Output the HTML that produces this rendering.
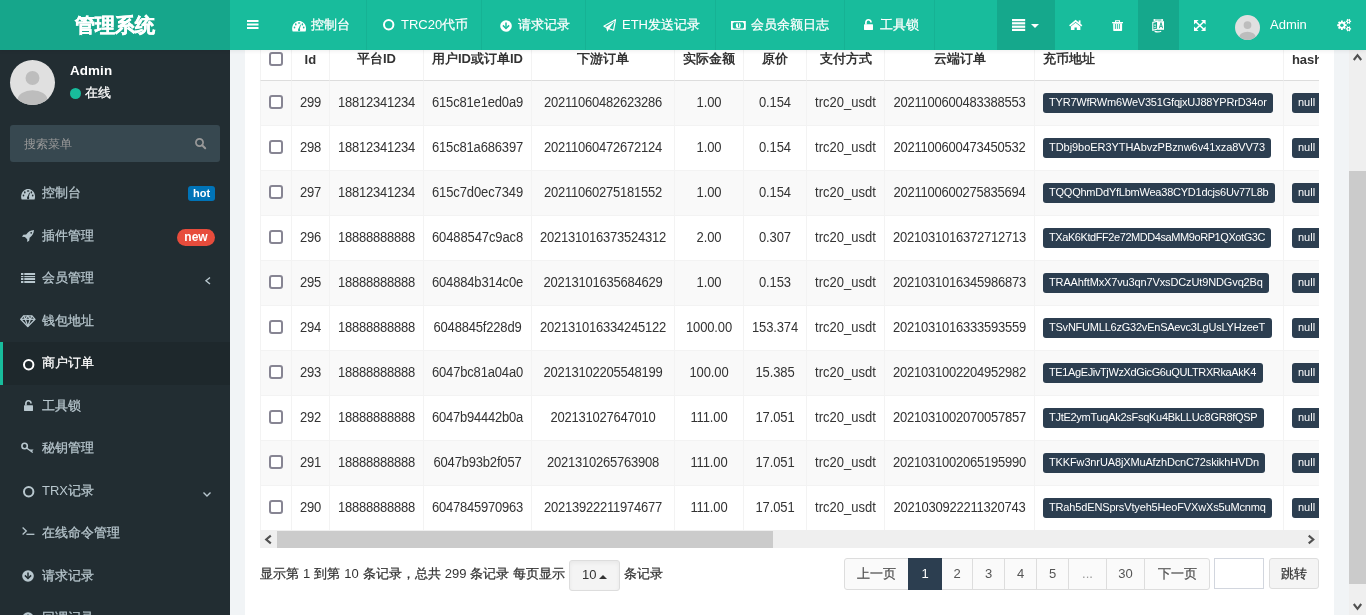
<!DOCTYPE html><html><head><meta charset="utf-8"><style>
*{box-sizing:border-box;margin:0;padding:0}
html,body{width:1366px;height:615px;overflow:hidden}
body{position:relative;font-family:"Liberation Sans",sans-serif;font-size:13px;color:#333;background:#f1f4f6}
svg.ic{position:absolute;overflow:visible;display:block}
#hdr{position:absolute;left:0;top:0;width:1366px;height:50px;background:#18bc9c;z-index:10;box-shadow:0 1px 4px rgba(0,0,0,.07)}
#logo{position:absolute;left:0;top:0;width:230px;height:50px;background:#16a68b;color:#fff;font-size:20px;font-weight:bold;text-align:center;line-height:50px;-webkit-text-stroke:0.5px #fff}
.sep{position:absolute;top:0;width:1px;height:50px;background:rgba(0,0,0,.05)}
.dark{position:absolute;top:0;height:50px;background:rgba(0,0,0,.1)}
.nt{position:absolute;top:0;height:50px;line-height:50px;color:#fff;font-size:13px;white-space:nowrap}
#side{position:absolute;left:0;top:50px;width:230px;height:565px;background:#222d32;z-index:5}
.mi{position:absolute;left:0;width:230px;height:43px;color:#b8c7ce}
.mi .t{position:absolute;left:42px;top:0;line-height:41px;font-size:13px;white-space:nowrap}
.mi.act{background:#1e282c;color:#fff}
.mi.act:before{content:"";position:absolute;left:0;top:0;width:3px;height:43px;background:#18bc9c}
.badge{position:absolute;color:#fff;font-weight:bold;font-size:11px;text-align:center}
#content{position:absolute;left:245px;top:0;width:1089px;height:615px;background:#fff}
#tbl{position:absolute;left:260px;top:0;width:1059px;height:530px;overflow:hidden}
.row{position:absolute;left:0;width:1300px;height:45px}
.row:before{content:"";position:absolute;left:0;top:0;width:100%;height:1px;background:#f3f3f3}
.row.s{background:#f9f9f9}
.c{position:absolute;top:0;height:45px;border-left:1px solid #f3f3f3;text-align:center;white-space:nowrap;line-height:45px}
.k{-webkit-text-stroke:0.25px currentColor}
.sy{display:inline-block;transform:scaleY(1.08);transform-origin:50% 27px}
.hd .c{font-weight:bold;border-bottom:1px solid #ddd;height:44px;line-height:45.5px}
.cb{position:absolute;left:8px;top:15px;width:14px;height:14px;border:2px solid #878593;border-radius:3px;background:#fff}
.lbl{position:absolute;left:8px;top:13px;height:20px;background:#2c3e50;color:#fff;border-radius:3px;font-size:11px;line-height:18px;padding:0 6px;overflow:hidden;white-space:nowrap}
#hsb{position:absolute;left:260px;top:530px;width:1059px;height:18px;background:#efefef}
#vsb{position:absolute;left:1349px;top:50px;width:17px;height:565px;background:#efefef;z-index:6}
.pg{position:absolute;top:558px;height:32px;border:1px solid #ddd;background:#fafafa;color:#555;text-align:center;line-height:30px;font-size:13px}
</style></head><body><div id="root" style="position:absolute;left:0;top:0;width:1366px;height:615px;overflow:hidden;will-change:transform">
<div id="content"></div>
<div id="tbl">
<div class="row s" style="top:80px"><div class="c" style="left:0px;width:31px"><div class="cb"></div></div><div class="c" style="left:31px;width:38px;letter-spacing:-0.230px"><span class="sy">299</span></div><div class="c" style="left:69px;width:94px;letter-spacing:-0.230px"><span class="sy">18812341234</span></div><div class="c" style="left:163px;width:108px;letter-spacing:-0.174px"><span class="sy">615c81e1ed0a9</span></div><div class="c" style="left:271px;width:143px;letter-spacing:-0.230px"><span class="sy">20211060482623286</span></div><div class="c" style="left:414px;width:69px;letter-spacing:-0.075px"><span class="sy">1.00</span></div><div class="c" style="left:483px;width:63px;letter-spacing:-0.106px"><span class="sy">0.154</span></div><div class="c" style="left:546px;width:78px;letter-spacing:0.030px"><span class="sy">trc20_usdt</span></div><div class="c" style="left:624px;width:150px;letter-spacing:-0.230px"><span class="sy">2021100600483388553</span></div><div class="c" style="left:774px;width:249px;text-align:left;padding-left:8px"><span class="lbl" style="width:230px;letter-spacing:-0.204px">TYR7WfRWm6WeV351GfqjxUJ88YPRrD34or</span></div><div class="c" style="left:1023px;width:217px;text-align:left;padding-left:8px"><span class="lbl">null</span></div></div>
<div class="row" style="top:125px"><div class="c" style="left:0px;width:31px"><div class="cb"></div></div><div class="c" style="left:31px;width:38px;letter-spacing:-0.230px"><span class="sy">298</span></div><div class="c" style="left:69px;width:94px;letter-spacing:-0.230px"><span class="sy">18812341234</span></div><div class="c" style="left:163px;width:108px;letter-spacing:-0.174px"><span class="sy">615c81a686397</span></div><div class="c" style="left:271px;width:143px;letter-spacing:-0.230px"><span class="sy">20211060472672124</span></div><div class="c" style="left:414px;width:69px;letter-spacing:-0.075px"><span class="sy">1.00</span></div><div class="c" style="left:483px;width:63px;letter-spacing:-0.106px"><span class="sy">0.154</span></div><div class="c" style="left:546px;width:78px;letter-spacing:0.030px"><span class="sy">trc20_usdt</span></div><div class="c" style="left:624px;width:150px;letter-spacing:-0.230px"><span class="sy">2021100600473450532</span></div><div class="c" style="left:774px;width:249px;text-align:left;padding-left:8px"><span class="lbl" style="width:228px;letter-spacing:-0.049px">TDbj9boER3YTHAbvzPBznw6v41xza8VV73</span></div><div class="c" style="left:1023px;width:217px;text-align:left;padding-left:8px"><span class="lbl">null</span></div></div>
<div class="row s" style="top:170px"><div class="c" style="left:0px;width:31px"><div class="cb"></div></div><div class="c" style="left:31px;width:38px;letter-spacing:-0.230px"><span class="sy">297</span></div><div class="c" style="left:69px;width:94px;letter-spacing:-0.230px"><span class="sy">18812341234</span></div><div class="c" style="left:163px;width:108px;letter-spacing:-0.118px"><span class="sy">615c7d0ec7349</span></div><div class="c" style="left:271px;width:143px;letter-spacing:-0.230px"><span class="sy">20211060275181552</span></div><div class="c" style="left:414px;width:69px;letter-spacing:-0.075px"><span class="sy">1.00</span></div><div class="c" style="left:483px;width:63px;letter-spacing:-0.106px"><span class="sy">0.154</span></div><div class="c" style="left:546px;width:78px;letter-spacing:0.030px"><span class="sy">trc20_usdt</span></div><div class="c" style="left:624px;width:150px;letter-spacing:-0.230px"><span class="sy">2021100600275835694</span></div><div class="c" style="left:774px;width:249px;text-align:left;padding-left:8px"><span class="lbl" style="width:231.6px;letter-spacing:-0.230px">TQQQhmDdYfLbmWea38CYD1dcjs6Uv77L8b</span></div><div class="c" style="left:1023px;width:217px;text-align:left;padding-left:8px"><span class="lbl">null</span></div></div>
<div class="row" style="top:215px"><div class="c" style="left:0px;width:31px"><div class="cb"></div></div><div class="c" style="left:31px;width:38px;letter-spacing:-0.230px"><span class="sy">296</span></div><div class="c" style="left:69px;width:94px;letter-spacing:-0.230px"><span class="sy">18888888888</span></div><div class="c" style="left:163px;width:108px;letter-spacing:-0.118px"><span class="sy">60488547c9ac8</span></div><div class="c" style="left:271px;width:143px;letter-spacing:-0.230px"><span class="sy">202131016373524312</span></div><div class="c" style="left:414px;width:69px;letter-spacing:-0.075px"><span class="sy">2.00</span></div><div class="c" style="left:483px;width:63px;letter-spacing:-0.106px"><span class="sy">0.307</span></div><div class="c" style="left:546px;width:78px;letter-spacing:0.030px"><span class="sy">trc20_usdt</span></div><div class="c" style="left:624px;width:150px;letter-spacing:-0.230px"><span class="sy">2021031016372712713</span></div><div class="c" style="left:774px;width:249px;text-align:left;padding-left:8px"><span class="lbl" style="width:228px;letter-spacing:-0.426px">TXaK6KtdFF2e72MDD4saMM9oRP1QXotG3C</span></div><div class="c" style="left:1023px;width:217px;text-align:left;padding-left:8px"><span class="lbl">null</span></div></div>
<div class="row s" style="top:260px"><div class="c" style="left:0px;width:31px"><div class="cb"></div></div><div class="c" style="left:31px;width:38px;letter-spacing:-0.230px"><span class="sy">295</span></div><div class="c" style="left:69px;width:94px;letter-spacing:-0.230px"><span class="sy">18888888888</span></div><div class="c" style="left:163px;width:108px;letter-spacing:-0.174px"><span class="sy">604884b314c0e</span></div><div class="c" style="left:271px;width:143px;letter-spacing:-0.230px"><span class="sy">20213101635684629</span></div><div class="c" style="left:414px;width:69px;letter-spacing:-0.075px"><span class="sy">1.00</span></div><div class="c" style="left:483px;width:63px;letter-spacing:-0.106px"><span class="sy">0.153</span></div><div class="c" style="left:546px;width:78px;letter-spacing:0.030px"><span class="sy">trc20_usdt</span></div><div class="c" style="left:624px;width:150px;letter-spacing:-0.230px"><span class="sy">2021031016345986873</span></div><div class="c" style="left:774px;width:249px;text-align:left;padding-left:8px"><span class="lbl" style="width:225.8px;letter-spacing:-0.131px">TRAAhftMxX7vu3qn7VxsDCzUt9NDGvq2Bq</span></div><div class="c" style="left:1023px;width:217px;text-align:left;padding-left:8px"><span class="lbl">null</span></div></div>
<div class="row" style="top:305px"><div class="c" style="left:0px;width:31px"><div class="cb"></div></div><div class="c" style="left:31px;width:38px;letter-spacing:-0.230px"><span class="sy">294</span></div><div class="c" style="left:69px;width:94px;letter-spacing:-0.230px"><span class="sy">18888888888</span></div><div class="c" style="left:163px;width:108px;letter-spacing:-0.182px"><span class="sy">6048845f228d9</span></div><div class="c" style="left:271px;width:143px;letter-spacing:-0.230px"><span class="sy">202131016334245122</span></div><div class="c" style="left:414px;width:69px;letter-spacing:-0.142px"><span class="sy">1000.00</span></div><div class="c" style="left:483px;width:63px;letter-spacing:-0.142px"><span class="sy">153.374</span></div><div class="c" style="left:546px;width:78px;letter-spacing:0.030px"><span class="sy">trc20_usdt</span></div><div class="c" style="left:624px;width:150px;letter-spacing:-0.230px"><span class="sy">2021031016333593559</span></div><div class="c" style="left:774px;width:249px;text-align:left;padding-left:8px"><span class="lbl" style="width:228.8px;letter-spacing:-0.223px">TSvNFUMLL6zG32vEnSAevc3LgUsLYHzeeT</span></div><div class="c" style="left:1023px;width:217px;text-align:left;padding-left:8px"><span class="lbl">null</span></div></div>
<div class="row s" style="top:350px"><div class="c" style="left:0px;width:31px"><div class="cb"></div></div><div class="c" style="left:31px;width:38px;letter-spacing:-0.230px"><span class="sy">293</span></div><div class="c" style="left:69px;width:94px;letter-spacing:-0.230px"><span class="sy">18888888888</span></div><div class="c" style="left:163px;width:108px;letter-spacing:-0.174px"><span class="sy">6047bc81a04a0</span></div><div class="c" style="left:271px;width:143px;letter-spacing:-0.230px"><span class="sy">20213102205548199</span></div><div class="c" style="left:414px;width:69px;letter-spacing:-0.127px"><span class="sy">100.00</span></div><div class="c" style="left:483px;width:63px;letter-spacing:-0.127px"><span class="sy">15.385</span></div><div class="c" style="left:546px;width:78px;letter-spacing:0.030px"><span class="sy">trc20_usdt</span></div><div class="c" style="left:624px;width:150px;letter-spacing:-0.230px"><span class="sy">2021031002204952982</span></div><div class="c" style="left:774px;width:249px;text-align:left;padding-left:8px"><span class="lbl" style="width:219.9px;letter-spacing:-0.376px">TE1AgEJivTjWzXdGicG6uQULTRXRkaAkK4</span></div><div class="c" style="left:1023px;width:217px;text-align:left;padding-left:8px"><span class="lbl">null</span></div></div>
<div class="row" style="top:395px"><div class="c" style="left:0px;width:31px"><div class="cb"></div></div><div class="c" style="left:31px;width:38px;letter-spacing:-0.230px"><span class="sy">292</span></div><div class="c" style="left:69px;width:94px;letter-spacing:-0.230px"><span class="sy">18888888888</span></div><div class="c" style="left:163px;width:108px;letter-spacing:-0.230px"><span class="sy">6047b94442b0a</span></div><div class="c" style="left:271px;width:143px;letter-spacing:-0.230px"><span class="sy">202131027647010</span></div><div class="c" style="left:414px;width:69px;letter-spacing:-0.127px"><span class="sy">111.00</span></div><div class="c" style="left:483px;width:63px;letter-spacing:-0.127px"><span class="sy">17.051</span></div><div class="c" style="left:546px;width:78px;letter-spacing:0.030px"><span class="sy">trc20_usdt</span></div><div class="c" style="left:624px;width:150px;letter-spacing:-0.230px"><span class="sy">2021031002070057857</span></div><div class="c" style="left:774px;width:249px;text-align:left;padding-left:8px"><span class="lbl" style="width:220.8px;letter-spacing:-0.278px">TJtE2ymTuqAk2sFsqKu4BkLLUc8GR8fQSP</span></div><div class="c" style="left:1023px;width:217px;text-align:left;padding-left:8px"><span class="lbl">null</span></div></div>
<div class="row s" style="top:440px"><div class="c" style="left:0px;width:31px"><div class="cb"></div></div><div class="c" style="left:31px;width:38px;letter-spacing:-0.230px"><span class="sy">291</span></div><div class="c" style="left:69px;width:94px;letter-spacing:-0.230px"><span class="sy">18888888888</span></div><div class="c" style="left:163px;width:108px;letter-spacing:-0.182px"><span class="sy">6047b93b2f057</span></div><div class="c" style="left:271px;width:143px;letter-spacing:-0.230px"><span class="sy">2021310265763908</span></div><div class="c" style="left:414px;width:69px;letter-spacing:-0.127px"><span class="sy">111.00</span></div><div class="c" style="left:483px;width:63px;letter-spacing:-0.127px"><span class="sy">17.051</span></div><div class="c" style="left:546px;width:78px;letter-spacing:0.030px"><span class="sy">trc20_usdt</span></div><div class="c" style="left:624px;width:150px;letter-spacing:-0.230px"><span class="sy">2021031002065195990</span></div><div class="c" style="left:774px;width:249px;text-align:left;padding-left:8px"><span class="lbl" style="width:222px;letter-spacing:-0.134px">TKKFw3nrUA8jXMuAfzhDcnC72skikhHVDn</span></div><div class="c" style="left:1023px;width:217px;text-align:left;padding-left:8px"><span class="lbl">null</span></div></div>
<div class="row" style="top:485px"><div class="c" style="left:0px;width:31px"><div class="cb"></div></div><div class="c" style="left:31px;width:38px;letter-spacing:-0.230px"><span class="sy">290</span></div><div class="c" style="left:69px;width:94px;letter-spacing:-0.230px"><span class="sy">18888888888</span></div><div class="c" style="left:163px;width:108px;letter-spacing:-0.230px"><span class="sy">6047845970963</span></div><div class="c" style="left:271px;width:143px;letter-spacing:-0.230px"><span class="sy">20213922211974677</span></div><div class="c" style="left:414px;width:69px;letter-spacing:-0.127px"><span class="sy">111.00</span></div><div class="c" style="left:483px;width:63px;letter-spacing:-0.127px"><span class="sy">17.051</span></div><div class="c" style="left:546px;width:78px;letter-spacing:0.030px"><span class="sy">trc20_usdt</span></div><div class="c" style="left:624px;width:150px;letter-spacing:-0.230px"><span class="sy">2021030922211320743</span></div><div class="c" style="left:774px;width:249px;text-align:left;padding-left:8px"><span class="lbl" style="width:228.8px;letter-spacing:-0.151px">TRah5dENSprsVtyeh5HeoFVXwXs5uMcnmq</span></div><div class="c" style="left:1023px;width:217px;text-align:left;padding-left:8px"><span class="lbl">null</span></div></div>
<div class="row hd" style="top:37px;height:44px;background:#fff;z-index:2"><div class="c" style="left:0px;width:31px"><div class="cb"></div></div><div class="c" style="left:31px;width:38px;letter-spacing:0.224px">Id</div><div class="c" style="left:69px;width:94px;letter-spacing:0.000px;line-height:44.5px">平台ID</div><div class="c" style="left:163px;width:108px;letter-spacing:0.000px;line-height:44.5px">用户ID或订单ID</div><div class="c" style="left:271px;width:143px;;line-height:44.5px">下游订单</div><div class="c" style="left:414px;width:69px;;line-height:44.5px">实际金额</div><div class="c" style="left:483px;width:63px;;line-height:44.5px">原价</div><div class="c" style="left:546px;width:78px;;line-height:44.5px">支付方式</div><div class="c" style="left:624px;width:150px;;line-height:44.5px">云端订单</div><div class="c" style="left:774px;width:249px;text-align:left;padding-left:8px;;line-height:44.5px">充币地址</div><div class="c" style="left:1023px;width:217px;text-align:left;padding-left:8px;letter-spacing:-0.085px">hash</div></div>
</div>
<div id="hsb"><div style="position:absolute;left:17px;top:1px;width:496px;height:17px;background:#cbcbcb"></div><svg class="ic" style="left:4.7px;top:5.1px" width="6.5" height="9" viewBox="0 0 6.5 9" ><polyline points="5.8,0.6 1.2,4.5 5.8,8.4" fill="none" stroke="#505050" stroke-width="2.1"/></svg><svg class="ic" style="left:1048.1px;top:5.4px" width="6.5" height="9" viewBox="0 0 6.5 9" ><polyline points="0.7,0.6 5.3,4.5 0.7,8.4" fill="none" stroke="#505050" stroke-width="2.1"/></svg></div>
<div style="position:absolute;left:260px;top:566px;line-height:16px;white-space:nowrap;color:#333;word-spacing:0.4px"><span class="k">显示第</span> 1 <span class="k">到第</span> 10 <span class="k">条记录，总共</span> 299 <span class="k">条记录</span> <span class="k">每页显示</span></div>
<div style="position:absolute;left:569px;top:560px;width:51px;height:31px;border:1px solid #ddd;border-radius:3px;background:#f4f4f4;box-shadow:inset 0 2px 4px rgba(0,0,0,.05)"></div>
<div style="position:absolute;left:582px;top:567px;line-height:16px;font-size:13px;color:#333">10</div>
<svg class="ic" style="left:599px;top:575px" width="8" height="4" viewBox="0 0 8 4" ><path d="M0,4 L4,0 L8,4Z" fill="#333"/></svg>
<div style="position:absolute;left:624px;top:566px;line-height:16px;white-space:nowrap;color:#333"><span class="k">条记录</span></div>
<div class="pg" style="left:844px;width:65px;border-radius:3px 0 0 3px"><span class="k">上一页</span></div>
<div class="pg" style="left:908px;width:34px;background:#2c3e50;border-color:#2c3e50;color:#fff;z-index:2">1</div>
<div class="pg" style="left:941px;width:32px">2</div>
<div class="pg" style="left:972px;width:33px">3</div>
<div class="pg" style="left:1004px;width:33px">4</div>
<div class="pg" style="left:1036px;width:33px">5</div>
<div class="pg" style="left:1068px;width:39px;color:#999">...</div>
<div class="pg" style="left:1106px;width:39px">30</div>
<div class="pg" style="left:1144px;width:66px;border-radius:0 3px 3px 0"><span class="k">下一页</span></div>
<div style="position:absolute;left:1214px;top:558px;width:50px;height:31px;border:1px solid #d2d6de;background:#fff"></div>
<div class="pg" style="left:1269px;width:50px;height:31px;background:#f4f4f4;border-radius:3px;color:#333"><span class="k">跳转</span></div>
<div id="vsb"><div style="position:absolute;left:0;top:121px;width:17px;height:413px;background:#cbcbcb"></div><svg class="ic" style="left:4px;top:4.4px" width="9" height="7" viewBox="0 0 9 7" ><polyline points="0.8,6 4.5,1.2 8.2,6" fill="none" stroke="#505050" stroke-width="2.1"/></svg><svg class="ic" style="left:3.9px;top:553.3px" width="9" height="7" viewBox="0 0 9 7" ><polyline points="0.8,1 4.5,5.8 8.2,1" fill="none" stroke="#505050" stroke-width="2.1"/></svg></div>
<div id="side">
<svg class="ic" style="left:10px;top:10px" width="45" height="45" viewBox="0 0 45 45" ><defs><clipPath id="cl45"><circle cx="22.5" cy="22.5" r="22.5"/></clipPath></defs><circle cx="22.5" cy="22.5" r="22.5" fill="#e0e0e0"/><g clip-path="url(#cl45)" fill="#bdbdbd"><circle cx="22.5" cy="18.0" r="6.975"/><ellipse cx="22.5" cy="39.6" rx="14.850000000000001" ry="9.45"/></g></svg>
<div style="position:absolute;left:70px;top:13px;font-weight:bold;font-size:13.4px;color:#fff;line-height:16px;letter-spacing:0.112px">Admin</div>
<svg class="ic" style="left:70px;top:38px" width="11" height="11"><circle cx="5.5" cy="5.5" r="5.5" fill="#18bc9c"/></svg>
<div style="position:absolute;left:85px;top:35px;font-size:13px;color:#fff;line-height:16px"><span class="k">在线</span></div>
<div style="position:absolute;left:10px;top:75px;width:210px;height:37px;background:#374850;border-radius:3px"></div>
<div style="position:absolute;left:24px;top:86px;font-size:12px;color:#999;line-height:16px">搜索菜单</div>
<svg class="ic" style="left:195px;top:88px" width="11" height="11" viewBox="0 0 11 11" ><circle cx="4.5" cy="4.5" r="3.6" fill="none" stroke="#999" stroke-width="1.7"/><path d="M7.2,7.2 L10.2,10.2" stroke="#999" stroke-width="2" stroke-linecap="round"/></svg>
<div class="mi" style="top:122.0px"><svg class="ic" style="left:20.9px;top:16.7px" width="14.2" height="10.4" viewBox="0 0 14.2 10.4" ><path d="M0.7,10.4 C0.1,9.2 0,7.6 0.3,6 C1.1,2.4 3.8,0 7.1,0 C10.4,0 13.1,2.4 13.9,6 C14.2,7.6 14.1,9.2 13.5,10.4 Z" fill="#b8c7ce"/><g fill="#222d32"><ellipse cx="7.1" cy="1.9" rx="1.3" ry="0.75"/><ellipse cx="3.8" cy="3.4" rx="0.8" ry="1.1"/><ellipse cx="10.4" cy="3.4" rx="0.8" ry="1.1"/><ellipse cx="2.5" cy="6.5" rx="0.8" ry="1.1"/><ellipse cx="11.7" cy="6.5" rx="0.8" ry="1.1"/><ellipse cx="7.1" cy="8.9" rx="1.1" ry="1.3"/><path d="M6.5,8 L8.3,3.6 L8.9,3.9 L7.7,8.3 Z"/></g></svg><div class="t"><span class="k">控制台</span></div></div>
<div class="mi" style="top:164.5px"><svg class="ic" style="left:22px;top:15px" width="12" height="12" viewBox="0 0 12 12" ><path d="M12,0 C8.5,0.2 6,2 4.2,4.4 L1.3,4.8 L0,6.8 L2.9,6.9 L5.2,9.2 L5.2,12 L7.2,10.8 L7.6,7.8 C10.2,6 11.8,3.5 12,0 Z" fill="#b8c7ce"/><circle cx="9.2" cy="2.8" r="0.9" fill="#222d32"/></svg><div class="t"><span class="k">插件管理</span></div></div>
<div class="mi" style="top:207.0px"><svg class="ic" style="left:21px;top:16px" width="14.1" height="10" viewBox="0 0 14.1 10" ><rect x="0" y="0" width="2.4" height="2" fill="#b8c7ce"/><rect x="3.3" y="0" width="10.8" height="2" fill="#b8c7ce"/><rect x="0" y="3" width="2.4" height="1.2" fill="#b8c7ce"/><rect x="3.3" y="3" width="10.8" height="1.2" fill="#b8c7ce"/><rect x="0" y="5" width="2.4" height="2" fill="#b8c7ce"/><rect x="3.3" y="5" width="10.8" height="2" fill="#b8c7ce"/><rect x="0" y="8" width="2.4" height="2" fill="#b8c7ce"/><rect x="3.3" y="8" width="10.8" height="2" fill="#b8c7ce"/></svg><div class="t"><span class="k">会员管理</span></div></div>
<div class="mi" style="top:249.5px"><svg class="ic" style="left:20px;top:15px" width="15.5" height="12" viewBox="0 0 15.5 12" ><g fill="none" stroke="#b8c7ce" stroke-width="1.3" stroke-linejoin="round"><path d="M3.6,0.8 H12 L15,4.3 L7.8,11.6 L0.7,4.3 Z"/><path d="M0.7,4.3 H15"/><path d="M3.6,0.8 L5.3,4.3 L7.8,0.8 L10.3,4.3 L12,0.8"/><path d="M5.3,4.3 L7.8,11.4 L10.3,4.3"/></g></svg><div class="t"><span class="k">钱包地址</span></div></div>
<div class="mi act" style="top:292.0px"><svg class="ic" style="left:22.5px;top:16.5px" width="11.4" height="11.4" viewBox="0 0 11.4 11.4" ><circle cx="5.7" cy="5.7" r="4.7" fill="none" stroke="#fff" stroke-width="2"/></svg><div class="t"><span class="k">商户订单</span></div></div>
<div class="mi" style="top:334.5px"><svg class="ic" style="left:23.5px;top:15px" width="9" height="11.7" viewBox="0 0 9 11.7" ><rect x="0" y="5.3" width="9" height="5.7" rx="0.5" fill="#b8c7ce"/><path d="M1.9,5.6 V3.4 A2.55,2.55 0 0 1 7,3.2 V3.6" fill="none" stroke="#b8c7ce" stroke-width="1.7"/></svg><div class="t"><span class="k">工具锁</span></div></div>
<div class="mi" style="top:377.0px"><svg class="ic" style="left:21px;top:15px" width="13" height="11" viewBox="0 0 13 11" ><g fill="none" stroke="#b8c7ce"><circle cx="3.6" cy="4" r="2.7" stroke-width="1.6"/><path d="M5.6,6 L11.8,10.6" stroke-width="1.3"/></g><path d="M8.6,7.4 L12.6,7.6 L10.8,9.6 Z" fill="#b8c7ce"/></svg><div class="t"><span class="k">秘钥管理</span></div></div>
<div class="mi" style="top:419.5px"><svg class="ic" style="left:22.5px;top:16.5px" width="11.4" height="11.4" viewBox="0 0 11.4 11.4" ><circle cx="5.7" cy="5.7" r="4.7" fill="none" stroke="#b8c7ce" stroke-width="2"/></svg><div class="t">TRX<span class="k">记录</span></div></div>
<div class="mi" style="top:462.0px"><svg class="ic" style="left:21.7px;top:15px" width="12.5" height="8" viewBox="0 0 12.5 8" ><g fill="none" stroke="#b8c7ce" stroke-width="1.3"><path d="M0.6,0.6 L4.3,4 L0.6,7.4"/><path d="M4.4,7.3 H12.4"/></g></svg><div class="t"><span class="k">在线命令管理</span></div></div>
<div class="mi" style="top:504.5px"><svg class="ic" style="left:22px;top:15px" width="12" height="12" viewBox="0 0 12 12" ><circle cx="6" cy="6" r="5.8" fill="#b8c7ce"/><g fill="none" stroke="#222d32" stroke-width="1.5"><path d="M6,2.4 V8.2"/><path d="M2.9,5.4 L6,8.5 L9.1,5.4"/></g></svg><div class="t"><span class="k">请求记录</span></div></div>
<div class="mi" style="top:547.0px"><svg class="ic" style="left:22px;top:15px" width="12" height="12" viewBox="0 0 12 12" ><circle cx="6" cy="6" r="5.8" fill="#b8c7ce"/><g fill="none" stroke="#222d32" stroke-width="1.5"><path d="M6,2.4 V8.2"/><path d="M2.9,5.4 L6,8.5 L9.1,5.4"/></g></svg><div class="t"><span class="k">回调记录</span></div></div>
<div class="badge" style="left:188px;top:136px;width:27px;height:15px;line-height:15px;background:#0073b7;border-radius:3px">hot</div>
<div class="badge" style="left:177px;top:179px;width:38px;height:17px;line-height:17px;background:#e74c3c;border-radius:9px;font-size:12px">new</div>
<svg class="ic" style="left:205px;top:227px" width="5.5" height="7.5" viewBox="0 0 5.5 7.5" ><polyline points="5,0.5 1,3.75 5,7" fill="none" stroke="#b8c7ce" stroke-width="1.4"/></svg>
<svg class="ic" style="left:203.2px;top:441.8px" width="8" height="5" viewBox="0 0 8 5" ><polyline points="0.5,0.5 4,4 7.5,0.5" fill="none" stroke="#b8c7ce" stroke-width="1.4"/></svg>
</div>
<div id="hdr">
<div id="logo">管理系统</div>
<svg class="ic" style="left:247px;top:20px" width="11.5" height="9" viewBox="0 0 11.5 9" ><rect x="0" y="0" width="11.5" height="2" fill="#fff"/><rect x="0" y="3.5" width="11.5" height="2" fill="#fff"/><rect x="0" y="7" width="11.5" height="2" fill="#fff"/></svg>
<div class="sep" style="left:365.5px"></div>
<div class="sep" style="left:481px"></div>
<div class="sep" style="left:585px"></div>
<div class="sep" style="left:714.5px"></div>
<div class="sep" style="left:844px"></div>
<div class="sep" style="left:934px"></div>
<div class="dark" style="left:997px;width:58px"></div>
<div class="dark" style="left:1138px;width:41px"></div>
<div class="nt" style="left:311px"><span class="k">控制台</span></div>
<div class="nt" style="left:401px">TRC20<span class="k">代币</span></div>
<div class="nt" style="left:518px"><span class="k">请求记录</span></div>
<div class="nt" style="left:622px">ETH<span class="k">发送记录</span></div>
<div class="nt" style="left:751px"><span class="k">会员余额日志</span></div>
<div class="nt" style="left:880px"><span class="k">工具锁</span></div>
<svg class="ic" style="left:291.5px;top:20.5px" width="14.2" height="10.4" viewBox="0 0 14.2 10.4" ><path d="M0.7,10.4 C0.1,9.2 0,7.6 0.3,6 C1.1,2.4 3.8,0 7.1,0 C10.4,0 13.1,2.4 13.9,6 C14.2,7.6 14.1,9.2 13.5,10.4 Z" fill="#fff"/><g fill="#18bc9c"><ellipse cx="7.1" cy="1.9" rx="1.3" ry="0.75"/><ellipse cx="3.8" cy="3.4" rx="0.8" ry="1.1"/><ellipse cx="10.4" cy="3.4" rx="0.8" ry="1.1"/><ellipse cx="2.5" cy="6.5" rx="0.8" ry="1.1"/><ellipse cx="11.7" cy="6.5" rx="0.8" ry="1.1"/><ellipse cx="7.1" cy="8.9" rx="1.1" ry="1.3"/><path d="M6.5,8 L8.3,3.6 L8.9,3.9 L7.7,8.3 Z"/></g></svg>
<svg class="ic" style="left:383.3px;top:19.3px" width="11.4" height="11.4" viewBox="0 0 11.4 11.4" ><circle cx="5.7" cy="5.7" r="4.7" fill="none" stroke="#fff" stroke-width="2"/></svg>
<svg class="ic" style="left:500px;top:19.6px" width="12" height="12" viewBox="0 0 12 12" ><circle cx="6" cy="6" r="5.8" fill="#fff"/><g fill="none" stroke="#18bc9c" stroke-width="1.5"><path d="M6,2.4 V8.2"/><path d="M2.9,5.4 L6,8.5 L9.1,5.4"/></g></svg>
<svg class="ic" style="left:603px;top:19px" width="13" height="13" viewBox="0 0 13 13" ><g fill="none" stroke="#fff" stroke-width="1.2" stroke-linejoin="round"><path d="M0.7,7.3 L12.5,0.7 L10.6,11.2 L6,9.6"/><path d="M0.7,7.3 L3.4,8.4"/></g><path d="M3,8.2 L11.6,2.2 L6.2,9.4 L4.3,12.8 Z" fill="#fff"/></svg>
<svg class="ic" style="left:731px;top:21px" width="14.8" height="8.8" viewBox="0 0 14.8 8.8" ><rect x="0" y="0" width="14.8" height="8.8" fill="#fff"/><polygon points="3,1.2 11.8,1.2 13,2.4 13,6.4 11.8,7.6 3,7.6 1.8,6.4 1.8,2.4" fill="#18bc9c"/><ellipse cx="7.3" cy="4.4" rx="2.4" ry="2.6" fill="#fff"/><path d="M6.6,3 L7.6,2.4 V6.2" fill="none" stroke="#18bc9c" stroke-width="1.1"/></svg>
<svg class="ic" style="left:863.5px;top:19px" width="9" height="11.7" viewBox="0 0 9 11.7" ><rect x="0" y="5.3" width="9" height="5.7" rx="0.5" fill="#fff"/><path d="M1.9,5.6 V3.4 A2.55,2.55 0 0 1 7,3.2 V3.6" fill="none" stroke="#fff" stroke-width="1.7"/></svg>
<svg class="ic" style="left:1011.9px;top:19px" width="13.2" height="12" viewBox="0 0 13.2 12" ><rect x="0" y="0" width="13.2" height="2.2" fill="#fff"/><rect x="0" y="3.2" width="13.2" height="2.2" fill="#fff"/><rect x="0" y="6.6" width="13.2" height="2.2" fill="#fff"/><rect x="0" y="9.8" width="13.2" height="2.2" fill="#fff"/></svg>
<svg class="ic" style="left:1031.2px;top:24.1px" width="8" height="4" viewBox="0 0 8 4" ><path d="M0,0 H8 L4,4Z" fill="#fff"/></svg>
<svg class="ic" style="left:1069.3px;top:19.8px" width="13.5" height="10.2" viewBox="0 0 13.5 10.2" ><polyline points="0.6,5.9 6.6,0.9 12.8,5.9" fill="none" stroke="#fff" stroke-width="1.7"/><rect x="9.7" y="0.4" width="1.8" height="3.4" fill="#fff"/><path d="M1.9,10 V6.5 L6.6,2.8 L11.4,6.5 V10 H7.8 V7.4 H5.5 V10 Z" fill="#fff"/></svg>
<svg class="ic" style="left:1112px;top:20px" width="11" height="11" viewBox="0 0 11 11" ><rect x="0.1" y="2" width="10.9" height="1.3" fill="#fff"/><path d="M3.6,2.2 V0.7 H7.5 V2.2" fill="none" stroke="#fff" stroke-width="1.1"/><path d="M1.2,3.2 H10.1 V10.2 Q10.1,10.9 9.4,10.9 H1.9 Q1.2,10.9 1.2,10.2 Z" fill="#fff"/><g fill="#18bc9c"><rect x="2.9" y="4" width="0.9" height="4.9"/><rect x="4.9" y="4" width="0.9" height="4.9"/><rect x="6.9" y="4" width="0.9" height="4.9"/></g></svg>
<svg class="ic" style="left:1152.2px;top:19px" width="12" height="13" viewBox="0 0 12 13" ><g fill="none" stroke="#fff" stroke-width="1.1"><path d="M0.8,3.4 L5.6,2.2 V10 L0.8,11.2 Z"/><path d="M2.6,1 H10.2"/><path d="M2.6,12.4 Q6.2,13.5 9.2,12.2"/></g><g fill="#fff"><circle cx="2.4" cy="0.9" r="1"/><circle cx="10.2" cy="0.9" r="1"/><rect x="6" y="2.2" width="6" height="8.6"/><path d="M1.8,6.5 L3.2,4.8 L4.2,7.2 L3.4,7.4 L3,6.2 L2.4,7 Z" opacity="0.8"/><rect x="1.8" y="8.2" width="2.4" height="0.9" opacity="0.8"/></g><path d="M7.4,9.2 L9,3.6 L10.6,9.2 M7.9,7.4 H10.1" fill="none" stroke="#17a98c" stroke-width="0.9"/></svg>
<svg class="ic" style="left:1193.9px;top:20px" width="11.6" height="11" viewBox="0 0 11.6 11" ><g fill="#fff"><polygon points="0,0 4.6,0 0,4.6"/><polygon points="11.6,0 7,0 11.6,4.6"/><polygon points="0,11 4.6,11 0,6.4"/><polygon points="11.6,11 7,11 11.6,6.4"/></g><path d="M1.5,1.5 L10.1,9.5 M10.1,1.5 L1.5,9.5" stroke="#fff" stroke-width="1.7"/></svg>
<svg class="ic" style="left:1235px;top:15px" width="25" height="25" viewBox="0 0 25 25" ><defs><clipPath id="cl25"><circle cx="12.5" cy="12.5" r="12.5"/></clipPath></defs><circle cx="12.5" cy="12.5" r="12.5" fill="#e0e0e0"/><g clip-path="url(#cl25)" fill="#bdbdbd"><circle cx="12.5" cy="10.0" r="3.875"/><ellipse cx="12.5" cy="22.0" rx="8.25" ry="5.25"/></g></svg>
<div class="nt" style="left:1270px">Admin</div>
<svg class="ic" style="left:1336.8px;top:19.2px" width="14.2" height="12.8" viewBox="0 0 14.2 12.8" ><polygon points="8.44,5.31 9.61,5.26 9.61,7.14 8.44,7.09 8.03,8.08 8.89,8.87 7.57,10.19 6.78,9.33 5.79,9.74 5.84,10.91 3.96,10.91 4.01,9.74 3.02,9.33 2.23,10.19 0.91,8.87 1.77,8.08 1.36,7.09 0.19,7.14 0.19,5.26 1.36,5.31 1.77,4.32 0.91,3.53 2.23,2.21 3.02,3.07 4.01,2.66 3.96,1.49 5.84,1.49 5.79,2.66 6.78,3.07 7.57,2.21 8.89,3.53 8.03,4.32" fill="#fff"/><circle cx="4.9" cy="6.2" r="1.7" fill="#18bc9c"/><polygon points="13.36,1.84 14.13,1.77 14.13,3.03 13.36,2.96 12.92,3.73 13.36,4.36 12.27,4.99 11.94,4.29 11.06,4.29 10.73,4.99 9.64,4.36 10.08,3.73 9.64,2.96 8.87,3.03 8.87,1.77 9.64,1.84 10.08,1.07 9.64,0.44 10.73,-0.19 11.06,0.51 11.94,0.51 12.27,-0.19 13.36,0.44 12.92,1.07" fill="#fff"/><circle cx="11.5" cy="2.4" r="0.8" fill="#18bc9c"/><polygon points="13.36,9.34 14.13,9.27 14.13,10.53 13.36,10.46 12.92,11.23 13.36,11.86 12.27,12.49 11.94,11.79 11.06,11.79 10.73,12.49 9.64,11.86 10.08,11.23 9.64,10.46 8.87,10.53 8.87,9.27 9.64,9.34 10.08,8.57 9.64,7.94 10.73,7.31 11.06,8.01 11.94,8.01 12.27,7.31 13.36,7.94 12.92,8.57" fill="#fff"/><circle cx="11.5" cy="9.9" r="0.8" fill="#18bc9c"/></svg>
</div>
</div></body></html>
